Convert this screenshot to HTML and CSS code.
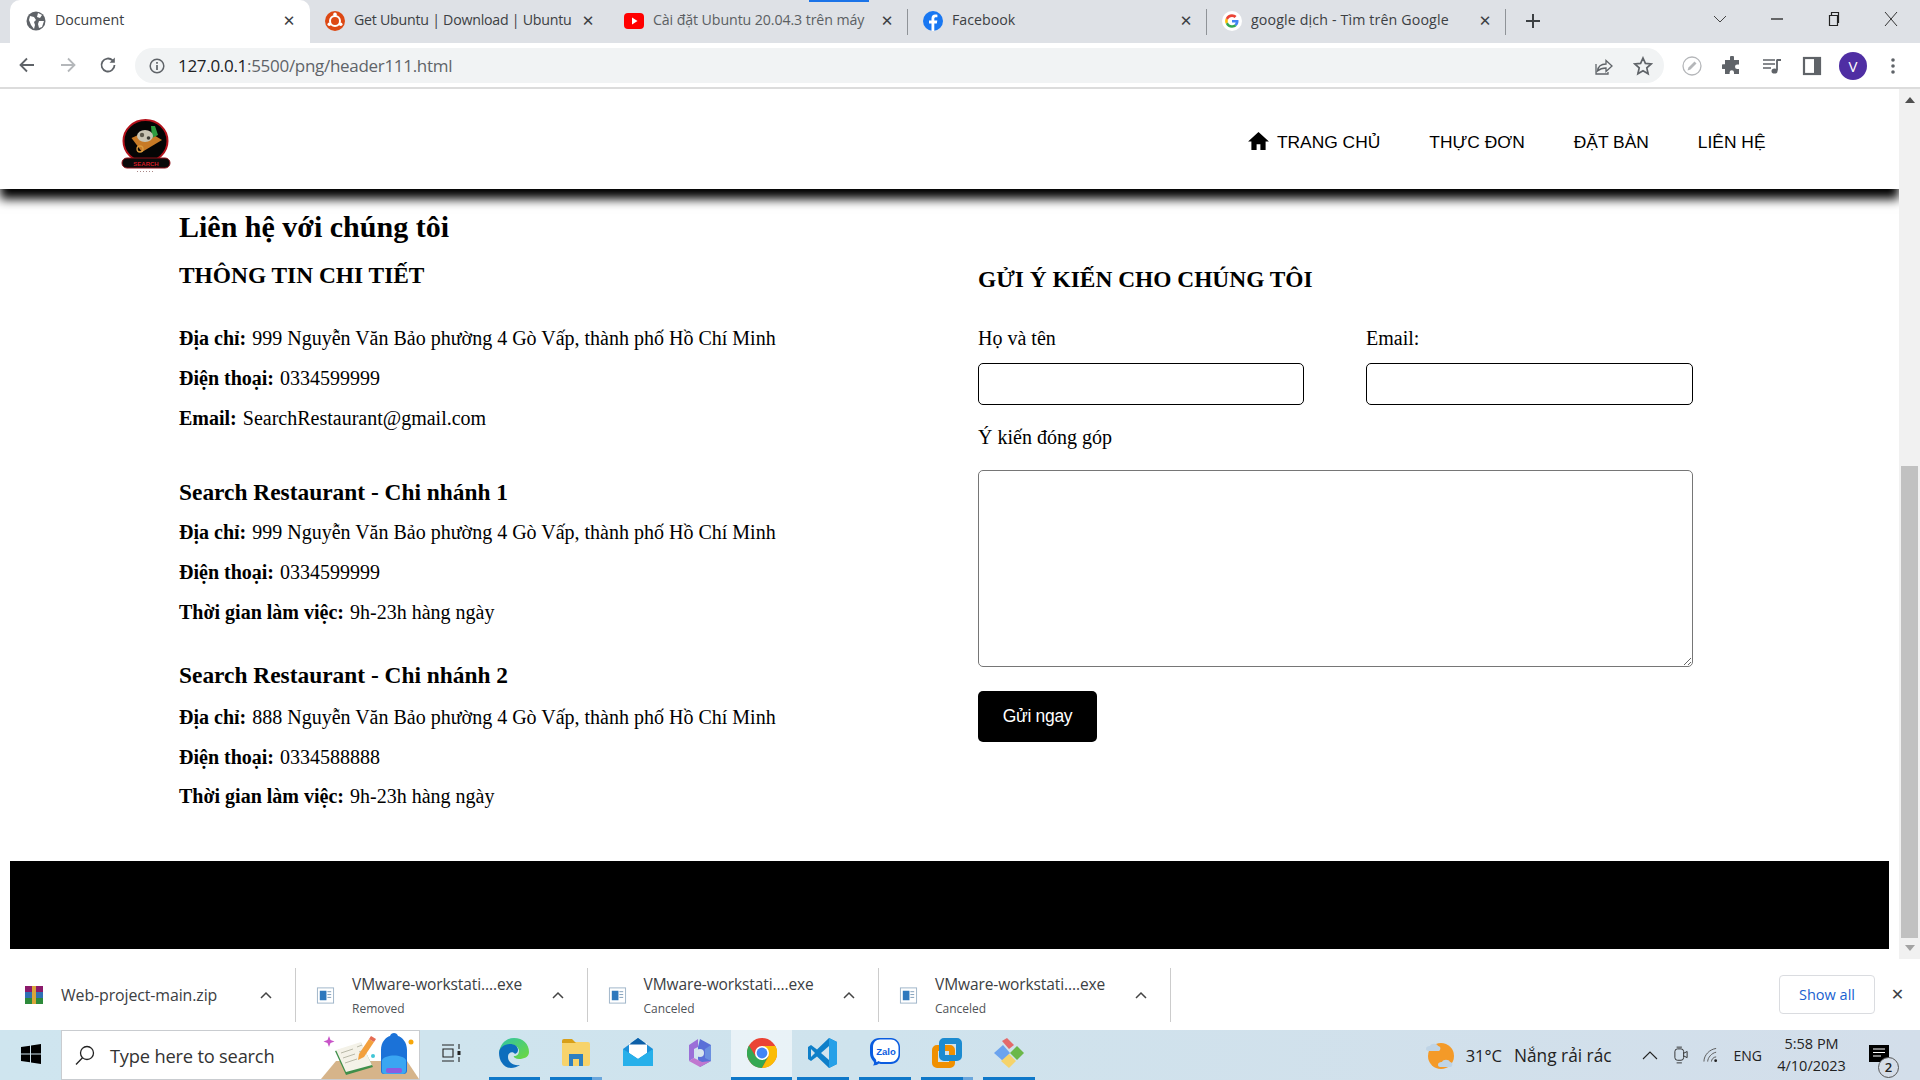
FILE: index.html
```html
<!DOCTYPE html>
<html lang="vi">
<head>
<meta charset="utf-8">
<title>Document</title>
<link rel="stylesheet" href="styles.css">
</head>
<body>
<div class="app">
  <div class="tabbar">
    <div class="load-line"></div>
    <div class="tab active">
      <svg class="fav" viewBox="0 0 20 20"><circle cx="10" cy="10" r="9.5" fill="#5f6368"/><path d="M4 5l4 1 2 3-2 2 1 3-1 4-3-4-2-5zM12 2l4 2-2 3-3-1zM13 10l5 0-2 6-3 1-1-4z" fill="#fff"/></svg>
      <span class="tab-title">Document</span><span class="tab-x">✕</span>
    </div>
    <div class="tab">
      <svg class="fav" viewBox="0 0 20 20"><circle cx="10" cy="10" r="10" fill="#dd4814"/><circle cx="10" cy="10" r="5" fill="none" stroke="#fff" stroke-width="2"/><circle cx="10" cy="3.4" r="1.8" fill="#fff"/><circle cx="4.3" cy="13.3" r="1.8" fill="#fff"/><circle cx="15.7" cy="13.3" r="1.8" fill="#fff"/></svg>
      <span class="tab-title tight">Get Ubuntu | Download | Ubuntu</span><span class="tab-x">✕</span>
    </div>
    <div class="tab sep">
      <svg class="fav" viewBox="0 0 20 20"><rect y="2" width="20" height="16" rx="4" fill="#f00"/><path d="M8 6.5l5.5 3.5L8 13.500z" fill="#fff"/></svg>
      <span class="tab-title fade">Cài đặt Ubuntu 20.04.3 trên máy</span><span class="tab-x">✕</span>
    </div>
    <div class="tab sep">
      <svg class="fav" viewBox="0 0 20 20"><circle cx="10" cy="10" r="10" fill="#1877f2"/><path d="M11.300 20v-7.500h2.500l.5-3h-3V7.800c0-.9.400-1.500 1.600-1.500h1.500V3.700c-.5-.1-1.300-.2-2.200-.2-2.300 0-3.700 1.400-3.700 3.900v2.100H6v3h2.500V20z" fill="#fff"/></svg>
      <span class="tab-title">Facebook</span><span class="tab-x">✕</span>
    </div>
    <div class="tab sep end">
      <svg class="fav" viewBox="0 0 20 20"><circle cx="10" cy="10" r="10" fill="#fff"/><path d="M16.500 10.200c0-.5 0-.9-.1-1.300H10v2.500h3.700c-.2.800-.6 1.500-1.300 2l2 1.600c1.300-1.200 2.100-2.900 2.100-4.800z" fill="#4285f4"/><path d="M10 16.800c1.800 0 3.400-.6 4.500-1.700l-2-1.600c-.6.400-1.500.7-2.500.7-1.900 0-3.500-1.300-4.100-3L3.800 12.800c1.100 2.400 3.500 4 6.200 4z" fill="#34a853"/><path d="M5.900 11.200c-.3-.8-.3-1.600 0-2.400L3.800 7.200c-.9 1.700-.9 3.900 0 5.600z" fill="#fbbc05"/><path d="M10 5.900c1 0 1.900.4 2.600 1l1.900-1.900C13.300 3.900 11.800 3.200 10 3.200 7.300 3.200 4.900 4.800 3.800 7.200l2.100 1.600c.6-1.700 2.200-2.900 4.100-2.900z" fill="#ea4335"/></svg>
      <span class="tab-title wide-title">google dịch - Tìm trên Google</span><span class="tab-x">✕</span>
    </div>
    <svg class="newtab" viewBox="0 0 16 16"><path d="M8 1v14M1 8h14" stroke="#3c4043" stroke-width="2"/></svg>
    <div class="win-controls">
      <svg viewBox="0 0 14 8" class="wc wc-chev"><path d="M1 1l6 6 6-6" fill="none" stroke="#444" stroke-width="1"/></svg>
      <svg viewBox="0 0 14 14" class="wc"><path d="M1 7h12" stroke="#222" stroke-width="1.300"/></svg>
      <svg viewBox="0 0 14 14" class="wc"><path d="M2.500 3.500h8v10h-8zM4.500 3.500v-3h7v10h-1" fill="none" stroke="#222" stroke-width="1.200"/></svg>
      <svg viewBox="0 0 14 14" class="wc"><path d="M1 0l12 14M13 0L1 14" stroke="#333" stroke-width="1"/></svg>
    </div>
  </div>

  <div class="toolbar">
    <div class="nav-btns">
      <svg viewBox="0 0 18 18" class="tb-ic"><path d="M16 9H3M9 2.500L2.500 9 9 15.500" fill="none" stroke="#5f6368" stroke-width="1.800"/></svg>
      <svg viewBox="0 0 18 18" class="tb-ic"><path d="M2 9h13M9 2.500L15.500 9 9 15.500" fill="none" stroke="#b4b7ba" stroke-width="1.800"/></svg>
      <svg viewBox="0 0 18 18" class="tb-ic"><path d="M15.500 9A6.500 6.500 0 1 1 13.600 4.400" fill="none" stroke="#5f6368" stroke-width="1.800"/><path d="M15.800 1.500v5.300h-5.300z" fill="#5f6368"/></svg>
    </div>
    <div class="omnibox">
      <svg viewBox="0 0 16 16" class="info"><circle cx="8" cy="8" r="6.800" fill="none" stroke="#5f6368" stroke-width="1.500"/><path d="M8 7v5M8 4v1.700" stroke="#5f6368" stroke-width="1.700"/></svg>
      <span class="url"><b>127.0.0.1</b>:5500/png/header111.html</span>
      <svg viewBox="0 0 20 20" class="om-ic"><path d="M2 8v10h12v-2M3.500 15c.5-4 3-7 8.500-7V4.500l6 5.500-6 5.500V12c-3.500 0-6 .8-8.500 3z" fill="none" stroke="#5f6368" stroke-width="1.300"/></svg>
      <svg viewBox="0 0 20 20" class="om-ic last"><path d="M10 2l2.400 5.400 5.800.6-4.400 3.900 1.300 5.800L10 14.700l-5.100 3 1.300-5.800L1.800 8l5.800-.6z" fill="none" stroke="#5f6368" stroke-width="1.700"/></svg>
    </div>
    <div class="ext">
      <svg viewBox="0 0 20 20"><circle cx="10" cy="10" r="9" fill="#fff" stroke="#b5b7ba" stroke-width="1.300"/><path d="M5.500 14.500l1-3 6-6 2 2-6 6z" fill="#b5b7ba"/></svg>
      <svg viewBox="0 0 20 20"><path d="M8 1.500a2 2 0 0 1 4 0V4h5v4.500h-1.800a2.200 2.200 0 0 0 0 4.400H17V18h-5v-1.600a2.200 2.200 0 0 0-4.400 0V18H3v-5H1.500a2.400 2.400 0 0 1 0-4.800H3V4h5z" fill="#5f6368"/></svg>
      <svg viewBox="0 0 20 20"><path d="M1 4h12M1 8h12M1 12h8" stroke="#5f6368" stroke-width="1.700"/><path d="M14.500 4H19M15 4v10.500" stroke="#5f6368" stroke-width="1.800" fill="none"/><ellipse cx="12.500" cy="15" rx="3" ry="2.600" fill="#5f6368"/></svg>
      <svg viewBox="0 0 20 20"><rect x="2" y="2" width="16" height="16" fill="#fff" stroke="#5f6368" stroke-width="2.200"/><rect x="12" y="2" width="6" height="16" fill="#5f6368"/></svg>
      <span class="avatar">V</span>
      <svg viewBox="0 0 20 20"><circle cx="10" cy="4" r="1.800" fill="#5f6368"/><circle cx="10" cy="10" r="1.800" fill="#5f6368"/><circle cx="10" cy="16" r="1.800" fill="#5f6368"/></svg>
    </div>
  </div>

  <div class="viewport">
    <div class="page">
      <header class="site-header">
        <svg class="logo" viewBox="0 0 50 54">
          <ellipse cx="24.500" cy="22" rx="22" ry="21" fill="#050505" stroke="#b3121b" stroke-width="2"/>
          <path d="M10.500 19L26 12l15 9-20 12z" fill="#c77a26"/>
          <path d="M30 7l4 0 3 9-6 3z" fill="#2e9c3f"/>
          <ellipse cx="24" cy="17" rx="8" ry="6" fill="#c9c5b4"/>
          <circle cx="21" cy="16" r="2.200" fill="#5d5a4c"/>
          <circle cx="27.500" cy="19" r="1.800" fill="#3a3a32"/>
          <circle cx="19" cy="30" r="3" fill="none" stroke="#d99a3d" stroke-width="1.300"/>
          <rect x="1" y="39" width="48" height="10" rx="5" fill="#0a0a0a" stroke="#8d1018"/>
          <text x="25" y="46.500" class="logo-word">SEARCH</text>
          <path d="M16 52.500h17" stroke="#a88" stroke-width="1" stroke-dasharray="1 2"/>
        </svg>
        <nav class="site-nav">
          <a class="nav-link home"><svg viewBox="0 0 22 19" class="home-ic"><path d="M11 0L0 10h3.500v9h5.500v-6h4v6h5.500v-9H22z" fill="#000"/></svg>TRANG CHỦ</a>
          <a class="nav-link">THỰC ĐƠN</a>
          <a class="nav-link">ĐẶT BÀN</a>
          <a class="nav-link">LIÊN HỆ</a>
        </nav>
      </header>

      <main class="contact">
        <h1 class="contact-title">Liên hệ với chúng tôi</h1>
        <div class="contact-grid">
          <section class="info-col">
            <h2 class="col-head">THÔNG TIN CHI TIẾT</h2>
            <p class="row"><b>Địa chỉ:</b> 999 Nguyễn Văn Bảo phường 4 Gò Vấp, thành phố Hồ Chí Minh</p>
            <p class="row"><b>Điện thoại:</b> 0334599999</p>
            <p class="row"><b>Email:</b> SearchRestaurant@gmail.com</p>
            <h3 class="branch first">Search Restaurant - Chi nhánh 1</h3>
            <p class="row"><b>Địa chỉ:</b> 999 Nguyễn Văn Bảo phường 4 Gò Vấp, thành phố Hồ Chí Minh</p>
            <p class="row"><b>Điện thoại:</b> 0334599999</p>
            <p class="row"><b>Thời gian làm việc:</b> 9h-23h hàng ngày</p>
            <h3 class="branch">Search Restaurant - Chi nhánh 2</h3>
            <p class="row"><b>Địa chỉ:</b> 888 Nguyễn Văn Bảo phường 4 Gò Vấp, thành phố Hồ Chí Minh</p>
            <p class="row"><b>Điện thoại:</b> 0334588888</p>
            <p class="row"><b>Thời gian làm việc:</b> 9h-23h hàng ngày</p>
          </section>
          <form class="form-col">
            <h2 class="col-head">GỬI Ý KIẾN CHO CHÚNG TÔI</h2>
            <div class="field-pair">
              <label class="field"><span>Họ và tên</span><input type="text"></label>
              <label class="field"><span>Email:</span><input type="text"></label>
            </div>
            <label class="field wide"><span>Ý kiến đóng góp</span><textarea></textarea></label>
            <button type="button" class="send">Gửi ngay</button>
          </form>
        </div>
      </main>
      <footer class="site-footer"></footer>
    </div>
    <div class="scrollbar">
      <svg viewBox="0 0 10 6" class="arrow"><path d="M5 0l5 6H0z" fill="#505050"/></svg>
      <div class="sb-thumb"></div>
      <svg viewBox="0 0 10 6" class="arrow dn"><path d="M0 0h10L5 6z" fill="#a3a3a3"/></svg>
    </div>
  </div>

  <div class="downloads">
    <div class="dl first">
      <svg viewBox="0 0 20 20" class="dl-ic rar"><rect x="1" y="1" width="18" height="6" fill="#8b1a6b"/><rect x="1" y="7" width="18" height="6" fill="#2f6fb5"/><rect x="1" y="13" width="18" height="6" fill="#2d8a3a"/><rect x="8" y="1" width="4" height="18" fill="#d9a53a"/></svg>
      <div class="dl-text one"><span class="dl-name">Web-project-main.zip</span></div>
      <svg viewBox="0 0 12 8" class="dl-chev"><path d="M1 7l5-5 5 5" fill="none" stroke="#444" stroke-width="1.500"/></svg>
    </div>
    <div class="dl">
      <svg viewBox="0 0 20 20" class="dl-ic"><rect x="1.500" y="2" width="17" height="16" fill="#fff" stroke="#9eb4c8"/><rect x="4" y="5" width="7" height="10" fill="#2e78bd"/><path d="M12 6h4M12 9h4M12 12h4" stroke="#7f9db8"/></svg>
      <div class="dl-text"><span class="dl-name">VMware-workstati....exe</span><span class="dl-sub">Removed</span></div>
      <svg viewBox="0 0 12 8" class="dl-chev"><path d="M1 7l5-5 5 5" fill="none" stroke="#444" stroke-width="1.500"/></svg>
    </div>
    <div class="dl">
      <svg viewBox="0 0 20 20" class="dl-ic"><rect x="1.500" y="2" width="17" height="16" fill="#fff" stroke="#9eb4c8"/><rect x="4" y="5" width="7" height="10" fill="#2e78bd"/><path d="M12 6h4M12 9h4M12 12h4" stroke="#7f9db8"/></svg>
      <div class="dl-text"><span class="dl-name">VMware-workstati....exe</span><span class="dl-sub">Canceled</span></div>
      <svg viewBox="0 0 12 8" class="dl-chev"><path d="M1 7l5-5 5 5" fill="none" stroke="#444" stroke-width="1.500"/></svg>
    </div>
    <div class="dl">
      <svg viewBox="0 0 20 20" class="dl-ic"><rect x="1.500" y="2" width="17" height="16" fill="#fff" stroke="#9eb4c8"/><rect x="4" y="5" width="7" height="10" fill="#2e78bd"/><path d="M12 6h4M12 9h4M12 12h4" stroke="#7f9db8"/></svg>
      <div class="dl-text"><span class="dl-name">VMware-workstati....exe</span><span class="dl-sub">Canceled</span></div>
      <svg viewBox="0 0 12 8" class="dl-chev"><path d="M1 7l5-5 5 5" fill="none" stroke="#444" stroke-width="1.500"/></svg>
    </div>
    <button type="button" class="show-all">Show all</button>
    <span class="dl-close">✕</span>
  </div>

  <div class="taskbar">
    <div class="start"><svg viewBox="0 0 20 20" class="win"><path d="M0 3l9-1.300V9.500H0zM10 1.500L20 0v9.500H10zM0 10.500h9v7.800L0 17zM10 10.500h10V20l-10-1.500z" fill="#000"/></svg></div>
    <div class="search">
      <svg viewBox="0 0 20 20" class="mag"><circle cx="12" cy="8" r="6.500" fill="none" stroke="#222" stroke-width="1.300"/><path d="M7.500 12.800L1 19.500" stroke="#222" stroke-width="1.300"/></svg>
      <span class="search-text">Type here to search</span>
      <svg viewBox="0 0 98 49" class="search-art">
        <path d="M15 31h71l12 18H0z" fill="#d6b48a"/>
        <path d="M8 6l1.500 4 4 1.500-4 1.500L8 17l-1.500-4-4-1.500 4-1.500z" fill="#c854c8"/>
        <path d="M14 21l26-8 12 24-27 8z" fill="#3f8f4a"/><path d="M15 20l25-8 11 23-26 7z" fill="#f4f2e8"/>
        <path d="M20 23l12-4M22 28l12-4M24 33l12-4M36 17l5-2M38 22l5-2" stroke="#b9b9a8"/>
        <path d="M38 24l10-15 5 3-10 15-6 3z" fill="#f2a03d"/><path d="M48 9l2-3 5 3-2 3z" fill="#e56b52"/>
        <circle cx="52" cy="26" r="2" fill="#41c6d6"/><circle cx="90" cy="12" r="2.500" fill="#f7a70a"/>
        <path d="M60 41V20c0-8 5-13 9-14 1-4 7-4 8 0 4 1 9 6 9 14v21c0 2-2 3-3 3H63c-2 0-3-1-3-3z" fill="#1b72d8"/>
        <path d="M61 30c3-6 21-6 24 0v11c0 2-2 3-3 3H64c-2 0-3-1-3-3z" fill="#3aa6f2"/><rect x="65" y="38" width="16" height="5" rx="2" fill="#8a5ce0"/>
      </svg>
    </div>
    <div class="tile view"><svg viewBox="0 0 20 20" class="tb"><path d="M1 2h12M1 18h12M2 6h10v8H2zM18 1v5M18 14v5" fill="none" stroke="#222" stroke-width="1.100"/><rect x="16.500" y="8" width="3" height="4" fill="#222"/></svg></div>
    <div class="tile on"><svg viewBox="0 0 30 30" class="tb"><defs><linearGradient id="eg" x1="0" y1="0" x2="1" y2="1"><stop offset="0" stop-color="#2fc4a8"/><stop offset="1" stop-color="#6fd83c"/></linearGradient></defs><path d="M15 0C24 0 30 6 30 14c0 5-5 7-10 7-4 0-6-2-5-3 3 0 5-2 5-5 0-4-4-6-8-6C6 7 1 11 0 15 1 6 7 0 15 0z" fill="url(#eg)"/><path d="M0 15c0-5 5-9 11-9 4 0 8 2 8 6 0 2-1 3-3 4-2-3-7-2-7 3 0 5 5 9 12 8-3 2-6 3-9 3-7 0-12-7-12-15z" fill="#0d6ebd"/></svg></div>
    <div class="tile on two"><svg viewBox="0 0 30 30" class="tb"><rect x="1" y="4" width="28" height="24" rx="2" fill="#f7d36b"/><path d="M1 3a2 2 0 0 1 2-2h8l4 4H1z" fill="#d89f18"/><path d="M8 28V16h14v12h-4v-7h-6v7z" fill="#2d7fc1"/></svg></div>
    <div class="tile"><svg viewBox="0 0 30 30" class="tb"><path d="M0 11L15 0l15 11v17H0z" fill="#1c8fd8"/><path d="M6 5h18v10l-9 6-9-6z" fill="#fff"/><path d="M0 11l15 10 15-10v17H0z" fill="#27b0ea"/><path d="M15 0l9 6.500H6z" fill="#0d5fa8"/></svg></div>
    <div class="tile"><svg viewBox="0 0 30 30" class="tb"><path d="M15 1l11 6v16l-11 6-2-8V9z" fill="#5a6fd8"/><path d="M4 7l9-6v8l-4 2v9l-5 3z" fill="#9b6fd8"/><path d="M4 23l5-3 8 4 9-1-11 6z" fill="#c077cf"/><path d="M26 7v16l-6-3v-9z" fill="#6b8fe0"/><circle cx="15" cy="15" r="4" fill="#d6e4ee"/></svg></div>
    <div class="tile on active"><svg viewBox="0 0 30 30" class="tb"><circle cx="15" cy="15" r="15" fill="#ea4335"/><path d="M15 15L2 22.500A15 15 0 0 0 15 30l8-15z" fill="#34a853"/><path d="M2 22.500A15 15 0 0 1 2 7.500L9 19z" fill="#34a853"/><path d="M15 8h13.500A15 15 0 0 1 15 30l6.500-11.500z" fill="#fbbc05"/><circle cx="15" cy="15" r="7" fill="#fff"/><circle cx="15" cy="15" r="5.400" fill="#4285f4"/></svg></div>
    <div class="tile on"><svg viewBox="0 0 30 30" class="tb"><path d="M21 0l8 4v22l-8 4L9 18.500 3 23l-3-2v-12l3-2 6 4.500z" fill="#0e7fc9"/><path d="M3 11v8l4-4z" fill="#d2e4ee"/><path d="M21 0l8 4v22l-8 4z" fill="#26a0e8"/><path d="M21 8l-8 7 8 7z" fill="#d2e4ee"/></svg></div>
    <div class="tile on"><svg viewBox="0 0 30 30" class="tb"><path d="M9 0h12c5 0 9 4 9 9v8c0 5-4 9-9 9H13c-2 0-3 0-4-.500-1 1-4 2-6 2 1-1 1.500-3 .5-4C1.500 21 0 19 0 15V9c0-5 4-9 9-9z" fill="#0a5ce0"/><path d="M10 1.500h11c4 0 7.500 3.500 7.500 7.500v7c0 4.500-3.500 8-8 8h-8c-2 0-3-.3-4-1-1 .6-1.500.8-2.500.9.500-1 .3-2-.5-3C3.500 19 3 17 3 15V9c0-4.500 3-7.500 7-7.500z" fill="#fff"/><text x="16" y="16.500" class="zalo-word">Zalo</text></svg></div>
    <div class="tile on two"><svg viewBox="0 0 30 30" class="tb"><rect x="3" y="10" width="17" height="17" rx="2" fill="none" stroke="#f09000" stroke-width="6"/><rect x="10" y="3" width="17" height="17" rx="2" fill="none" stroke="#1c8bd0" stroke-width="6"/></svg></div>
    <div class="tile on"><svg viewBox="0 0 30 30" class="tb"><path d="M0 15l9-8 7 8-7 8z" fill="#6ba3ee"/><path d="M8 3l5-3 7 7-5 4z" fill="#e46a6a"/><path d="M16 15l7-7 7 7-7 7z" fill="#6bb84a"/><path d="M7 23l8-7 7 7-7 7z" fill="#f5d36b"/></svg></div>
    <div class="tray">
      <svg viewBox="0 0 30 30" class="sun"><circle cx="16" cy="16" r="13" fill="#f49a28"/><path d="M1 9c0-3 3-3 4-3 1-3 7-3 8 0 3 0 3 4 1 5H3c-1 0-2-1-2-2z" fill="#bfd4e6"/><path d="M13 25c0-3 3-3 4-3 1-3 7-3 8 0 3 0 3 4 1 5H15c-1 0-2-1-2-2z" fill="#bfd4e6"/></svg>
      <span class="temp">31°C</span><span class="cond">Nắng rải rác</span>
      <svg viewBox="0 0 16 10" class="t-chev"><path d="M1 9l7-7 7 7" fill="none" stroke="#222" stroke-width="1.100"/></svg>
      <svg viewBox="0 0 16 20" class="t-meet"><rect x="1" y="3" width="10" height="13" rx="3" fill="none" stroke="#222"/><path d="M11 8l4-2v7l-4-2" fill="none" stroke="#222"/><path d="M3 1h6M3 19h6" stroke="#222"/></svg>
      <svg viewBox="0 0 16 16" class="t-wifi"><path d="M1 15C1 8 7 2 14 1M5 15c0-4 4-9 9-10M9 15c0-2 2-5 5-5" fill="none" stroke="#555" stroke-width="1"/><circle cx="13.500" cy="14" r="1.500" fill="#222"/></svg>
      <span class="lang">ENG</span>
      <div class="clock"><span>5:58 PM</span><span>4/10/2023</span></div>
      <div class="notif">
        <svg viewBox="0 0 20 17" class="n-ic"><path d="M0 0h20v17H0z" fill="#000"/><path d="M4 4h12M4 7.500h12M4 11h8" stroke="#fff" stroke-width="1"/></svg>
        <span class="n-badge">2</span>
      </div>
    </div>
  </div>
</div>
</body>
</html>
```

FILE: styles.css
```css
* { box-sizing: border-box; }
html, body { margin: 0; height: 100%; }
body { overflow: hidden; background: #fff; font-family: "Liberation Serif", serif; color: #000; }
.app { width: 1920px; height: 1080px; display: flex; flex-direction: column; overflow: hidden; }

/* tabs */
.tabbar { position: relative; height: 43px; flex: none; background: #dee1e6; display: flex; align-items: stretch; padding-left: 10px; font-family: "Open Sans", "Noto Sans", sans-serif; font-size: 14.2px; color: #3c4043; }
.load-line { position: absolute; left: 809px; top: 0; width: 60px; height: 2px; background: #1a73e8; }
.tab { position: relative; width: 299px; display: flex; align-items: center; padding: 0 14px 2px 15px; }
.tab.active { width: 300px; background: #fff; border-radius: 10px 10px 0 0; padding-left: 16px; }
.tab.sep::after { content: ""; position: absolute; right: 0; top: 9px; bottom: 8px; width: 1px; background: #8f9398; }
.fav { width: 20px; height: 20px; flex: none; margin-right: 9px; }
.tab-title { flex: 1; min-width: 0; white-space: nowrap; overflow: hidden; padding-bottom: 2px; }
.tab-title.fade { color: #5b5f63; letter-spacing: -.1px; }
.tab-title.tight { letter-spacing: -.25px; }
.tab-title.wide-title { letter-spacing: .15px; }
.tab-x { width: 14px; flex: none; font-size: 15px; text-align: center; color: #3c4043; font-family: "DejaVu Sans", sans-serif; font-weight: 700; }
.newtab { width: 16px; height: 16px; margin: 13px 0 0 19px; }
.win-controls { position: absolute; right: 22px; top: 0; height: 38px; display: flex; align-items: center; gap: 43px; }
.wc { width: 14px; height: 14px; display: block; }
.wc-chev { height: 8px; }

/* toolbar */
.toolbar { height: 46px; flex: none; background: #fff; border-bottom: 2px solid #dcdcdc; display: flex; align-items: flex-start; padding-top: 5px; }
.nav-btns { width: 135px; display: flex; gap: 22.500px; padding: 8px 0 0 18px; flex: none; }
.tb-ic { width: 18px; height: 18px; }
.omnibox { width: 1529px; height: 35px; flex: none; background: #f1f3f4; border-radius: 18px; display: flex; align-items: center; padding-left: 14px; padding-right: 11.5px; }
.info { width: 16px; height: 16px; margin-right: 13px; flex: none; }
.url { flex: 1; font-family: "Open Sans", "Noto Sans", sans-serif; font-size: 17px; color: #5f6368; letter-spacing: -0.3px; }
.url b { font-weight: 400; color: #202124; }
.om-ic { width: 20px; height: 20px; margin-left: 19px; }
.ext { flex: 1; display: flex; align-items: center; height: 35px; padding-left: 18px; gap: 20px; }
.ext svg { width: 20px; height: 20px; flex: none; }
.avatar { width: 28px; height: 28px; margin: 0 -4px 0 -3px; border-radius: 50%; background: #4f2ea3; color: #fff; flex: none; font: 15px/28px "Open Sans", sans-serif; text-align: center; }

/* page */
.viewport { height: 870px; flex: none; display: flex; overflow: hidden; }
.page { width: 1899px; flex: none; background: #fff; overflow: hidden; }
.site-header { height: 100px; display: flex; align-items: center; justify-content: space-between; padding: 0 133.500px 0 121px; box-shadow: 0 10px 10px #000; position: relative; z-index: 1; background: #fff; }
.logo { width: 50px; height: 54px; margin-top: 14px; }
.logo-word { font: 700 6px "Liberation Sans", sans-serif; fill: #d11a24; text-anchor: middle; }
.site-nav { display: flex; gap: 49px; font-family: "Liberation Sans", sans-serif; font-size: 17.4px; padding-top: 6px; }
.nav-link { display: flex; align-items: center; color: #000; }
.home-ic { width: 21px; height: 18px; margin-right: 8px; margin-top: -3px; }

.contact { height: 672px; padding: 22px 0 0 179px; }
.contact-title { margin: 0; font-size: 30px; line-height: 32px; font-weight: 700; }
.contact-grid { display: grid; grid-template-columns: 799px 715px; margin-top: 13px; }
.col-head { margin: 0; font-size: 23.4px; line-height: 26px; font-weight: 700; }
.info-col .col-head { margin-top: 6px; margin-bottom: 31px; }
.row { margin: 0; font-size: 20px; line-height: 39.8px; }
.row b { margin-right: 1px; }
.branch { margin: 24.5px 0 4.500px; font-size: 23.4px; line-height: 36px; font-weight: 700; }
.branch.first { margin: 36px 0 3px; }
.form-col { padding-top: 10px; }
.field-pair { display: grid; grid-template-columns: 326px 327px; gap: 62px; margin-top: 34.5px; }
.field { display: flex; flex-direction: column; font-size: 20px; }
.field span { line-height: 23px; }
.field input { height: 42px; margin-top: 13px; border: 1.500px solid #000; border-radius: 5px; background: #fff; display: block; }
.wide { margin-top: 21px; }
.wide textarea { height: 197px; margin-top: 21px; border: 1.500px solid #767676; border-radius: 5px; display: block; width: 715px; background: #fff; }
.send { display: block; margin-top: 24px; width: 119px; height: 51px; background: #000; color: #fff; border: 0; border-radius: 5px; font: 17.500px "Liberation Sans", sans-serif; letter-spacing: -.3px; }
.site-footer { height: 88px; background: #000; margin: 0 10px; }

.scrollbar { width: 21px; flex: none; background: #f1f1f1; display: flex; flex-direction: column; align-items: center; justify-content: space-between; }
.arrow { width: 10px; height: 6px; margin-top: 8px; flex: none; }
.arrow.dn { margin: 0 0 8px; }
.sb-thumb { width: 17px; height: 472px; background: #c1c1c1; margin-top: auto; margin-bottom: 7px; }

/* downloads */
.downloads { height: 71px; flex: none; background: #fff; display: flex; align-items: center; font-family: "Open Sans", "Noto Sans", sans-serif; color: #3c4043; }
.dl { width: 291.500px; height: 54px; flex: none; display: flex; align-items: center; border-right: 1px solid #ccc; padding-left: 20px; padding-right: 23px; margin-top: 1px; }
.dl.first { width: 296px; padding-left: 24px; }
.dl-ic { width: 19px; height: 19px; flex: none; margin-right: 17px; }
.dl.first .dl-ic { width: 20px; height: 20px; }
.dl-text { flex: 1; min-width: 0; display: flex; flex-direction: column; gap: 8px; }
.dl-name { font-size: 15.500px; line-height: 18px; white-space: nowrap; letter-spacing: -.1px; }
.one .dl-name { font-size: 15.900px; }
.dl-sub { font-size: 12px; line-height: 15px; color: #4f5358; }
.dl-chev { width: 12px; height: 8px; flex: none; }
.show-all { margin-left: auto; width: 96px; height: 39px; background: #fff; border: 1px solid #dadce0; border-radius: 4px; color: #1a5fd0; font: 14.500px "Open Sans", sans-serif; }
.dl-close { width: 45px; text-align: center; font: 700 16px "DejaVu Sans", sans-serif; color: #3c4043; }

/* taskbar */
.taskbar { height: 50px; flex: none; background: linear-gradient(90deg, #cfe5ef 0%, #cfe3ed 45%, #d3deea 100%); display: flex; align-items: stretch; font-family: "Open Sans", "Noto Sans", sans-serif; color: #222; }
.start { width: 61px; flex: none; display: flex; align-items: center; justify-content: center; }
.win { width: 20px; height: 20px; margin-top: -2px; }
.search { width: 359px; flex: none; background: #fff; border: 1px solid #c9ccd0; display: flex; align-items: center; padding-left: 13px; position: relative; }
.mag { width: 20px; height: 20px; flex: none; margin-right: 15px; }
.search-text { font-size: 18.3px; color: #333; letter-spacing: -.2px; white-space: nowrap; }
.search-art { position: absolute; right: 0; bottom: 0; width: 98px; height: 49px; }
.tile { width: 61.800px; flex: none; display: flex; align-items: center; justify-content: center; padding-bottom: 5px; position: relative; }
.tile.view { width: 65px; margin-left: -1.500px; }
.tb { width: 30px; height: 30px; }
.tile.view .tb { width: 20px; height: 20px; }
.tile.on::after { content: ""; position: absolute; left: 5px; right: 5px; bottom: 0; height: 3px; background: #0f78c9; }
.tile.two::after { background: linear-gradient(90deg, #0f78c9 80%, #6aa6dc 80%); }
.tile.active { background: rgba(255,255,255,.55); }
.tile.active::after { left: 0; right: 0; }
.tray { flex: 1; display: flex; align-items: center; padding-left: 385px; font-size: 16px; white-space: nowrap; }
.sun { width: 30px; height: 30px; flex: none; margin-right: 11px; }
.temp { font-size: 16.5px; margin-right: 12px; }
.cond { font-size: 17.3px; margin-right: 30px; }
.t-chev { width: 16px; height: 10px; margin-right: 16px; flex: none; }
.t-meet { width: 14px; height: 20px; margin-right: 15px; flex: none; }
.t-wifi { width: 15px; height: 16px; margin-right: 16px; flex: none; }
.lang { font-size: 14px; margin-right: 16px; }
.clock { display: flex; flex-direction: column; align-items: center; width: 67px; flex: none; font-size: 14.500px; line-height: 22px; }
.notif { position: relative; margin-left: 24px; width: 34px; height: 30px; flex: none; }
.n-ic { width: 20px; height: 17px; display: block; margin-top: 5px; }
.n-badge { position: absolute; left: 9px; top: 17px; width: 21px; height: 21px; border-radius: 50%; border: 1px solid #555; background: #d5dde8; font-size: 13px; line-height: 19px; text-align: center; font-weight: 600; }
.zalo-word { font: 700 9.500px "Liberation Sans", sans-serif; fill: #0a5ce0; text-anchor: middle; }
```
